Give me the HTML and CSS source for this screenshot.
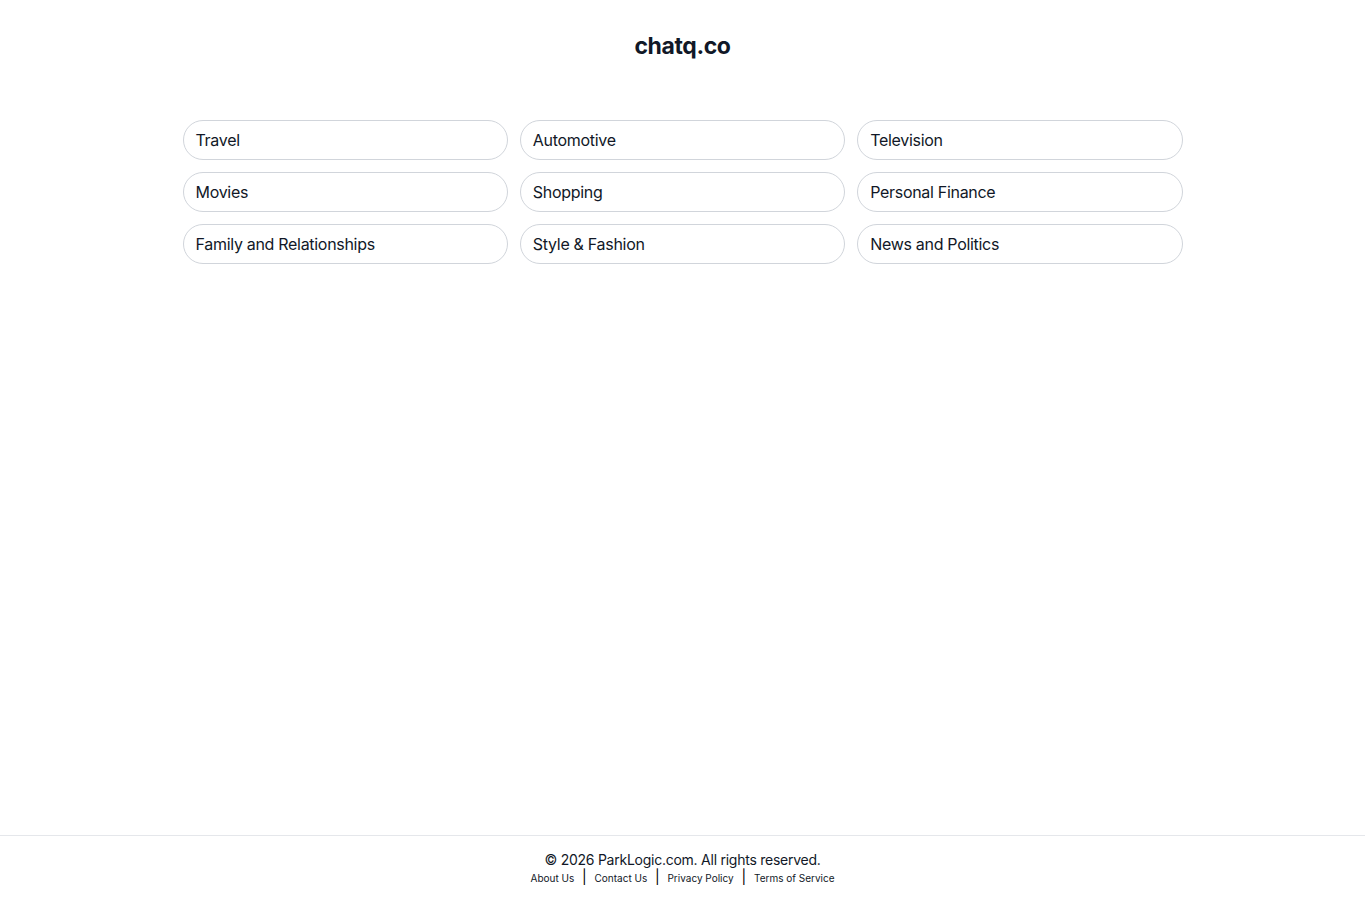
FILE: index.html
```html
<!DOCTYPE html>
<html lang="en">
<head>
    <meta charset="UTF-8">
    <meta name="viewport" content="width=device-width, initial-scale=1.0">
    <title>chatq.co</title>
    <link rel="stylesheet" href="styles.css">
</head>
<body>

<div class="page">
    <main class="main">
        <h1 class="site-title">chatq.co</h1>

        <div class="topics">
            <a class="topic" href="#">Travel</a>
            <a class="topic" href="#">Automotive</a>
            <a class="topic" href="#">Television</a>
            <a class="topic" href="#">Movies</a>
            <a class="topic" href="#">Shopping</a>
            <a class="topic" href="#">Personal Finance</a>
            <a class="topic" href="#">Family and Relationships</a>
            <a class="topic" href="#">Style &amp; Fashion</a>
            <a class="topic" href="#">News and Politics</a>
        </div>
    </main>

    <footer class="footer">
        <p class="copyright">&copy; 2026 ParkLogic.com. All rights reserved.</p>
        <nav class="footer-links">
            <a href="#">About Us</a>
            <span class="sep">|</span>
            <a href="#">Contact Us</a>
            <span class="sep">|</span>
            <a href="#">Privacy Policy</a>
            <span class="sep">|</span>
            <a href="#">Terms of Service</a>
        </nav>
    </footer>
</div>

</body>
</html>
```

FILE: styles.css
```css
body {
    font-family: Inter, "Noto Sans", Arial, sans-serif;
    background-color: #fff;
    color: #111827;
    margin: 0;
    padding: 0;
}
.page {
    min-height: 100vh;
    display: flex;
    flex-direction: column;
}
.main {
    flex: 1;
    width: 1000px;
    margin: 0 auto;
}
.site-title {
    margin: 0;
    padding-top: 30px;
    font-size: 23px;
    line-height: 32px;
    font-weight: 700;
    letter-spacing: -0.4px;
    text-align: center;
}
.topics {
    display: grid;
    grid-template-columns: repeat(3, 1fr);
    gap: 12px;
    margin-top: 58px;
}
.topic {
    display: block;
    height: 40px;
    line-height: 38px;
    box-sizing: border-box;
    padding: 0 12px;
    border: 1px solid #d1d5db;
    border-radius: 20px;
    color: #111827;
    font-size: 16px;
    letter-spacing: -0.3px;
    text-decoration: none;
}
.footer {
    border-top: 1px solid #e5e7eb;
    padding: 15px 0 14px;
    text-align: center;
}
.copyright {
    margin: 0;
    font-size: 14px;
    line-height: 18px;
    letter-spacing: -0.25px;
}
.footer-links {
    font-size: 10px;
    line-height: 16px;
}
.footer-links a {
    color: #111827;
    text-decoration: none;
}
.sep {
    color: #000;
    font-size: 14px;
    margin: 0 5px;
}
```
